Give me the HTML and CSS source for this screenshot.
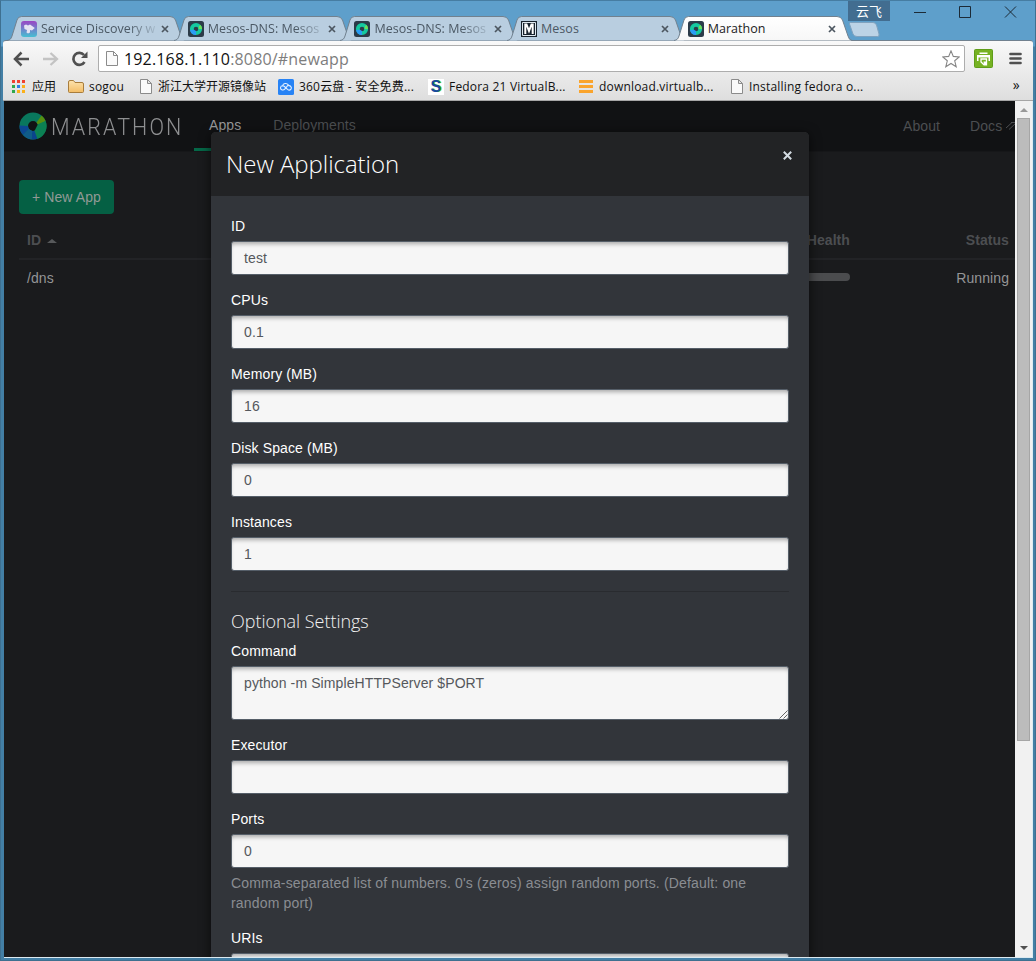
FILE: index.html
```html
<!DOCTYPE html>
<html lang="en">
<head>
<meta charset="utf-8">
<title>Marathon</title>
<link rel="stylesheet" href="styles.css">
</head>
<body>
<svg width="0" height="0" class="defs">
  <defs>
    <linearGradient id="purple" x1="0" y1="0" x2="0" y2="1"><stop offset="0" stop-color="#9b45c4"/><stop offset="1" stop-color="#45bfd2"/></linearGradient>
    <linearGradient id="active" x1="0" y1="0" x2="0" y2="1"><stop offset="0" stop-color="#fff"/><stop offset="1" stop-color="#f7f7f7"/></linearGradient>
    <linearGradient id="folder" x1="0" y1="0" x2="0" y2="1"><stop offset="0" stop-color="#fde3ae"/><stop offset="1" stop-color="#f3bd66"/></linearGradient>
    <symbol id="tab" viewBox="0 0 178 25"><path d="M0 24.5C3 24 4 23 5 20L10 4Q11 .5 14.500 .5H163Q167 .5 168.500 4L174 20Q175 24 178 24.500" stroke="#71818f"/></symbol>
    <symbol id="ring" viewBox="0 0 28 28">
      <circle cx="14" cy="14" r="9.250" fill="none" stroke="#05b68a" stroke-width="8.500"/>
      <path d="M17.500 10.500L22.500 3.600A13.500 13.500 0 0 1 26.600 9L18.800 12.500Z" fill="#7fdc10"/>
      <path d="M18.800 12.500L26.600 9A13.500 13.500 0 0 1 18.300 26.800L15.500 19Z" fill="#08c47b"/>
      <path d="M15.500 19L18.300 26.800A13.500 13.500 0 0 1 12.500 27.400L13.200 19Z" fill="#0664d6"/>
      <path d="M13.200 19L12.500 27.400A13.500 13.500 0 0 1 4 23L9.800 17Z" fill="#1089d0"/>
      <path d="M9.800 17L4 23A13.500 13.500 0 0 1 .5 13.500L9 14Z" fill="#0a68e0"/>
    </symbol>
    <symbol id="dns" viewBox="0 0 16 16"><rect width="16" height="16" rx="2.500" fill="#2c3b49"/><circle cx="8" cy="8" r="4.200" fill="none" stroke="#14c9a0" stroke-width="3.800"/><path d="M2 9L6 8.800L8 10V14A6 6 0 0 1 2 9" fill="#2a9cf5"/><path d="M11 5L12.600 4A6 6 0 0 1 14 8H10.500Z" fill="#6be05a"/></symbol>
    <symbol id="page" viewBox="0 0 12 15"><path d="M.5 .5H7.500L11.500 4.500V14.500H.5ZM7.500 .5V4.500H11.500" fill="#fafafa" stroke="#8b8b8b"/></symbol>
    <symbol id="close" viewBox="0 0 8 8"><path d="M1 1L7 7M7 1L1 7" fill="none" stroke="currentColor" stroke-width="1.700"/></symbol>
  </defs>
</svg>
<div class="window">
  <div class="titlebar">
    <div class="tabs">
      <div class="tab"><svg class="tab-shape"><use href="#tab"/></svg>
        <svg class="fav" viewBox="0 0 16 16"><rect width="16" height="16" rx="3" fill="url(#purple)"/><path d="M3 4.500L5 3.500L7 4.500L9 3.500L13.800 7L11 9.500L9 9V11.500L7 12.500L5.500 11.500L6 9L3.500 8Z" fill="#e5e2f3"/></svg>
        <span class="tab-title fade">Service Discovery w</span><svg class="x"><use href="#close"/></svg></div>
      <div class="tab"><svg class="tab-shape"><use href="#tab"/></svg><svg class="fav"><use href="#dns"/></svg><span class="tab-title fade">Mesos-DNS: Mesos</span><svg class="x"><use href="#close"/></svg></div>
      <div class="tab"><svg class="tab-shape"><use href="#tab"/></svg><svg class="fav"><use href="#dns"/></svg><span class="tab-title fade">Mesos-DNS: Mesos</span><svg class="x"><use href="#close"/></svg></div>
      <div class="tab"><svg class="tab-shape"><use href="#tab"/></svg>
        <svg class="fav" viewBox="0 0 16 16"><rect width="16" height="16" fill="#17222d"/><path d="M1.500 1.500H14.500V14.500H1.500Z" fill="none" stroke="#dfe8ef"/><path d="M4.300 13V3.500H5.500L8 10L10.500 3.500H11.700V13" fill="none" stroke="#fff" stroke-width="2"/></svg>
        <span class="tab-title">Mesos</span><svg class="x"><use href="#close"/></svg></div>
      <div class="tab current"><svg class="tab-shape"><use href="#tab"/></svg><svg class="fav"><use href="#dns"/></svg><span class="tab-title">Marathon</span><svg class="x"><use href="#close"/></svg></div>
    </div>
    <svg class="newtab" viewBox="0 0 32 16"><path d="M2.500 .5H25Q27.500 .5 28.500 3L31 12Q31.500 14.500 29.500 14.500H9Q6 14.500 5 12L1.500 2Q1 .5 2.500 .5Z" fill="#bcd3e6" stroke="#7fa2bf"/></svg>
    <div class="user">云飞</div>
    <svg class="winctl" viewBox="0 0 110 24" fill="none" stroke="#1c2a36"><path d="M4 12.500H16M49.500 6.500H60.500V17.500H49.500ZM95 6.500L106 17.500M106 6.500L95 17.500"/></svg>
  </div>
  <div class="chrome">
    <div class="toolbar">
      <svg class="navicons" viewBox="0 0 80 24" fill="none">
        <path d="M3 12H17M9.500 5.500L3 12L9.500 18.500" stroke="#505050" stroke-width="2.500"/>
        <path d="M31 12H45M38.500 6L45 12L38.500 18" stroke="#c3c3c3" stroke-width="2.300"/>
        <path d="M72.500 15A6 6 0 1 1 72 8" stroke="#505050" stroke-width="2.700"/><path d="M75.500 4.500V11H69Z" fill="#505050"/>
      </svg>
      <div class="omnibox"><svg class="doc"><use href="#page"/></svg><span class="url">192.168.1.110<i>:8080/#newapp</i></span>
        <svg class="star" viewBox="0 0 18 18"><path d="M9 .9L11.300 6.400L17.200 6.900L12.700 10.800L14.200 16.700L9 13.500L3.800 16.700L5.300 10.800L.8 6.900L6.700 6.400Z" fill="none" stroke="#858585" stroke-width="1.100"/></svg></div>
      <svg class="printer" viewBox="0 0 19 19"><rect x=".5" y=".5" width="18" height="18" rx="1" fill="#76b222" stroke="#5f9d19"/><path d="M5.500 3.500H13.500V5H5.500ZM3 6H16V12H14.500V8.500H4.500V12H3Z" fill="#fff"/><path d="M7 10H12.500V15.800H10L7 13Z" fill="#76b222" stroke="#fff" stroke-width="1.300"/><path d="M9.500 12.500H12.500V16H10Z" fill="#fff"/></svg>
      <svg class="menu" viewBox="0 0 13 13"><path d="M1.500 2H11.500M1.500 6.500H11.500M1.500 11H11.500" stroke="#505050" stroke-width="2.700" stroke-linecap="round"/></svg>
    </div>
    <div class="bookmarks">
      <div class="bm b1"><svg width="13" height="13" viewBox="0 0 13 13"><path d="M0 0h3v3H0zM5 0h3v3H5zM10 0h3v3h-3z" fill="#f04030"/><path d="M0 5h3v3H0z" fill="#2fa84c"/><path d="M5 5h3v3H5z" fill="#2b7de9"/><path d="M10 5h3v3h-3zM5 10h3v3H5zM10 10h3v3h-3z" fill="#fbb018"/><path d="M0 10h3v3H0z" fill="#2fa84c"/></svg><span>应用</span></div>
      <div class="bm b2"><svg width="16" height="14" viewBox="0 0 16 14"><path d="M.5 11.500V2Q.5 .5 2 .5H5.500L7 2.500H14Q15.500 2.500 15.500 4V11.500Q15.500 12.500 14.500 12.500H1.500Q.5 12.500 .5 11.500Z" fill="url(#folder)" stroke="#a87d3c"/></svg><span>sogou</span></div>
      <div class="bm b3"><svg width="12" height="15"><use href="#page"/></svg><span>浙江大学开源镜像站</span></div>
      <div class="bm b4"><svg width="16" height="16" viewBox="0 0 16 16"><rect width="16" height="16" rx="1.500" fill="#2783f5"/><path d="M4.500 6.800A3.300 3.300 0 0 1 10.300 5.800L7 9.800Q5.500 11.600 3.700 10.800A2.100 2.100 0 0 1 4.500 6.800Q5.800 6.800 7 8L9.500 10.400Q11.500 12 13 10.200A2.300 2.300 0 0 0 10.300 6.800" fill="none" stroke="#e5f1ff" stroke-width="1.100"/></svg><span>360云盘 - 安全免费...</span></div>
      <div class="bm b5"><b class="s-icon">S</b><span>Fedora 21 VirtualB...</span></div>
      <div class="bm b6"><svg width="14" height="13" viewBox="0 0 14 13"><path d="M0 0h14v3H0zM0 5h14v3H0zM0 10h14v3H0z" fill="#faa42c"/></svg><span>download.virtualb...</span></div>
      <div class="bm b7"><svg width="12" height="15"><use href="#page"/></svg><span>Installing fedora o...</span></div>
      <span class="more">»</span>
    </div>
  </div>
  <div class="viewport">
    <div class="page">
      <div class="nav">
        <svg class="logo"><use href="#ring"/></svg><span class="brand">MARATHON</span>
        <span class="navlink on">Apps</span><span class="navlink">Deployments</span>
        <span class="about">About</span><span class="docs">Docs <svg width="14" height="10" viewBox="0 0 14 10"><path d="M0 7L6 1.500M3 8.500L10 2M5 1.500H10V6.500" fill="none" stroke="currentColor"/></svg></span>
      </div>
      <div class="main">
        <div class="newapp">+ New App</div>
        <div class="row head"><span class="id">ID <i class="caret"></i></span><span class="health">Health</span><span>Status</span></div>
        <div class="row"><span class="id">/dns</span><span class="bar"></span><span>Running</span></div>
      </div>
      <div class="modal">
        <div class="modal-head"><h3>New Application</h3><svg class="modal-x" viewBox="0 0 9 9"><path d="M.8 .8L8.200 8.200M8.200 .8L.8 8.200" stroke="#d3dbe2" stroke-width="2"/></svg></div>
        <div class="modal-body">
          <label>ID</label><div class="input">test</div>
          <label>CPUs</label><div class="input">0.1</div>
          <label>Memory (MB)</label><div class="input">16</div>
          <label>Disk Space (MB)</label><div class="input">0</div>
          <label>Instances</label><div class="input">1</div>
          <hr>
          <h4>Optional Settings</h4>
          <label>Command</label><div class="input area">python -m SimpleHTTPServer $PORT<svg class="grip" viewBox="0 0 9 9"><path d="M.5 8.500L8.500 .5M4.500 8.500L8.500 4.500" stroke="#555" stroke-width=".9"/></svg></div>
          <label>Executor</label><div class="input"></div>
          <label>Ports</label><div class="input with-help">0</div>
          <p>Comma-separated list of numbers. 0's (zeros) assign random ports. (Default: one random port)</p>
          <label>URIs</label><div class="input"></div>
        </div>
      </div>
    </div>
    <div class="scrollbar"><i class="up"></i><div class="thumb"></div><i class="down"></i></div>
  </div>
</div>
</body>
</html>
```
FILE: styles.css
```css
* { box-sizing: border-box; }
body { margin: 0; overflow: hidden; font: 14px/20px "Liberation Sans", Arial, sans-serif; }
.defs { position: absolute; }
.window { width: 1036px; height: 961px; padding: 1px 3px 2px; background: linear-gradient(#5e9fcb 0 45px, #437fa5 46px, #437fa5 100%); border: 1px solid #3e7090; border-top-color: #467da2; display: flex; flex-direction: column; }
.titlebar { height: 38px; display: flex; position: relative; flex: none; margin: 0 -3px; font-family: "Open Sans", "Noto Sans CJK SC", sans-serif; }
.tabs { display: flex; padding: 14px 0 0 6px; height: 39px; }
.tab { position: relative; width: 166.7px; height: 25px; flex: none; display: flex; align-items: center; padding-left: 14px; color: #4b5864; font-size: 12.5px; }
.tab-shape { position: absolute; left: 0; top: 0; width: 178px; height: 25px; fill: #b9cee0; }
.current { z-index: 2; color: #222; }
.current .tab-shape { fill: url(#active); }
.fav { position: relative; width: 16px; height: 16px; flex: none; }
.tab-title { position: relative; width: 116px; margin-left: 4px; white-space: nowrap; overflow: hidden; letter-spacing: .02px; }
.fade { -webkit-mask-image: linear-gradient(90deg, #000 75%, transparent 103%); mask-image: linear-gradient(90deg, #000 75%, transparent 103%); }
.x { position: relative; width: 8px; height: 8px; margin-left: 4px; color: #4c5660; flex: none; }
.newtab { width: 32px; height: 16px; margin: 20px 0 0 8px; }
.user { position: absolute; left: 847px; top: -1px; width: 42px; height: 20px; background: #426d90; color: #fff; font-size: 13px; line-height: 20px; text-align: center; }
.winctl { position: absolute; left: 909px; top: -2px; width: 110px; height: 24px; }
.chrome { height: 61px; flex: none; margin: 0 -1px; background: linear-gradient(#f9f9f9, #dedede); border-top: 1px solid #71818f; border-bottom: 1px solid #a6a6a6; border-radius: 3px 3px 0 0; }
.toolbar { height: 32px; display: flex; align-items: center; padding: 3px 0 0 9px; }
.navicons { width: 80px; height: 24px; }
.omnibox { display: flex; align-items: center; width: 867px; height: 27px; margin-left: 6px; padding: 0 4px 0 7px; background: #fff; border: 1px solid #adadad; border-radius: 2px; flex: none; }
.doc { width: 12px; height: 15px; }
.url { flex: 1; margin-left: 6px; font: 16px/24px "Open Sans", sans-serif; letter-spacing: .16px; color: #111; }
.url i { font-style: normal; color: #7d7d7d; }
.star { width: 18px; height: 18px; }
.printer { width: 19px; height: 19px; margin-left: 9px; }
.menu { width: 13px; height: 13px; margin-left: 16px; }
.bookmarks { display: flex; align-items: center; height: 27px; padding-left: 9px; font: 12px/20px "Open Sans", "Noto Sans CJK SC", sans-serif; letter-spacing: .19px; color: #111; position: relative; }
.bm { display: flex; align-items: center; gap: 6px; flex: none; white-space: nowrap; }
.b1 { width: 56px; gap: 7px; letter-spacing: 0; }
.b2 { width: 72px; gap: 5px; }
.b3 { width: 138px; letter-spacing: 0; }
.b4 { width: 150px; gap: 5px; }
.b5 { width: 151px; gap: 5px; }
.b6 { width: 152px; }
.s-icon { width: 16px; height: 16px; background: #fff; color: #1749a2; font-family: "Liberation Sans", Arial, sans-serif; font-size: 16px; line-height: 16px; text-align: center; text-shadow: 1px 0 #64cf16; }
.more { margin: -3px 0 0 auto; padding-right: 13px; font-size: 14px; line-height: 16px; }
.viewport { flex: 1; display: flex; min-height: 0; margin-right: -1px; border-bottom: 1px solid #dceaf1; border-right: 1px solid #dceaf1; }
.page { position: relative; width: 1011px; flex: none; background: #1a1b1d; overflow: hidden; letter-spacing: .08px; }
.nav { height: 51px; display: flex; background: #111214; border-bottom: 1px solid #161719; color: #4c4e51; line-height: 50px; }
.logo { width: 28px; height: 28px; margin: 11px 0 0 15px; opacity: .62; }
.brand { width: 142px; margin-left: 4px; font: 300 24.500px/51px Roboto, sans-serif; letter-spacing: 2.400px; color: #8e8f91; transform: scaleX(.875); transform-origin: 0 0; }
.navlink { padding: 0 15px; height: 50px; line-height: 48px; }
.brand + .navlink { margin-left: 1px; }
.on { border-bottom: 3px solid #056848; color: #999a9b; }
.navlink + .navlink { margin-left: 2px; }
.about { margin-left: auto; }
.docs { margin-left: 30px; width: 45px; white-space: nowrap; }
.main { padding: 28px 0 0 15px; }
.newapp { width: 95px; height: 34px; border-radius: 4px; background: #056044; color: #919a96; text-align: center; line-height: 34px; }
.row { display: flex; align-items: center; height: 36px; padding: 0 6px 0 8px; color: #949596; }
.head { height: 46px; padding-top: 7px; border-bottom: 2px solid #222326; font-weight: bold; color: #4c4e51; }
.id { flex: 1; }
.caret { display: inline-block; border: 5px solid transparent; border-top: 0; border-bottom: 4px solid #57595b; margin: 0 0 2px 2px; }
.head span:last-child, .row span:last-child { width: 159px; text-align: right; }
.health { width: 60px; text-align: right; }
.bar { width: 100px; height: 8px; border-radius: 4px; background: #4b4c4e; margin-top: -2px; }
.modal { position: absolute; left: 207px; top: 31px; width: 598px; height: 940px; background: #32353a; border-radius: 5px 5px 0 0; box-shadow: 0 2px 12px rgba(0,0,0,.65); color: #f2f2f2; }
.modal-head { height: 64px; display: flex; justify-content: space-between; padding: 0 17px 0 15px; background: #222325; border-radius: 5px 5px 0 0; }
h3 { margin: 0; font: 300 24px/64px "Open Sans", sans-serif; letter-spacing: -.04px; color: #fff; }
.modal-x { width: 9px; height: 9px; margin-top: 19px; }
.modal-body { padding: 20px; }
label { display: block; margin-bottom: 5px; color: #fff; letter-spacing: .12px; }
.input { position: relative; height: 34px; margin-bottom: 15px; padding: 6px 12px; border: 1px solid #555e68; border-radius: 3px; background: #f6f6f6; box-shadow: inset 0 4px 4px -2px #a8a8a8; color: #55585c; letter-spacing: .1px; }
.area { height: 54px; }
.grip { position: absolute; right: 0; bottom: 0; width: 9px; height: 9px; }
hr { margin: 20px 0 19px; border: 0; border-top: 1px solid #292b2f; }
h4 { margin: 0 0 10px; font: 300 18px/20px "Open Sans", sans-serif; letter-spacing: -.03px; }
.with-help { margin-bottom: 5px; }
p { margin: 0 0 15px; width: 530px; color: #8a8d92; letter-spacing: .165px; }
.scrollbar { flex: 1; display: flex; flex-direction: column; align-items: center; background: #f1f1f1; }
.up { border: 4px solid transparent; border-top: 0; border-bottom-color: #999; margin: 7px 0 6px; }
.thumb { width: 13px; height: 623px; background: #bcbcbc; border: 1px solid #a6a6a6; }
.down { border: 4px solid transparent; border-bottom: 0; border-top-color: #505050; margin: auto 0 7px; }
```
